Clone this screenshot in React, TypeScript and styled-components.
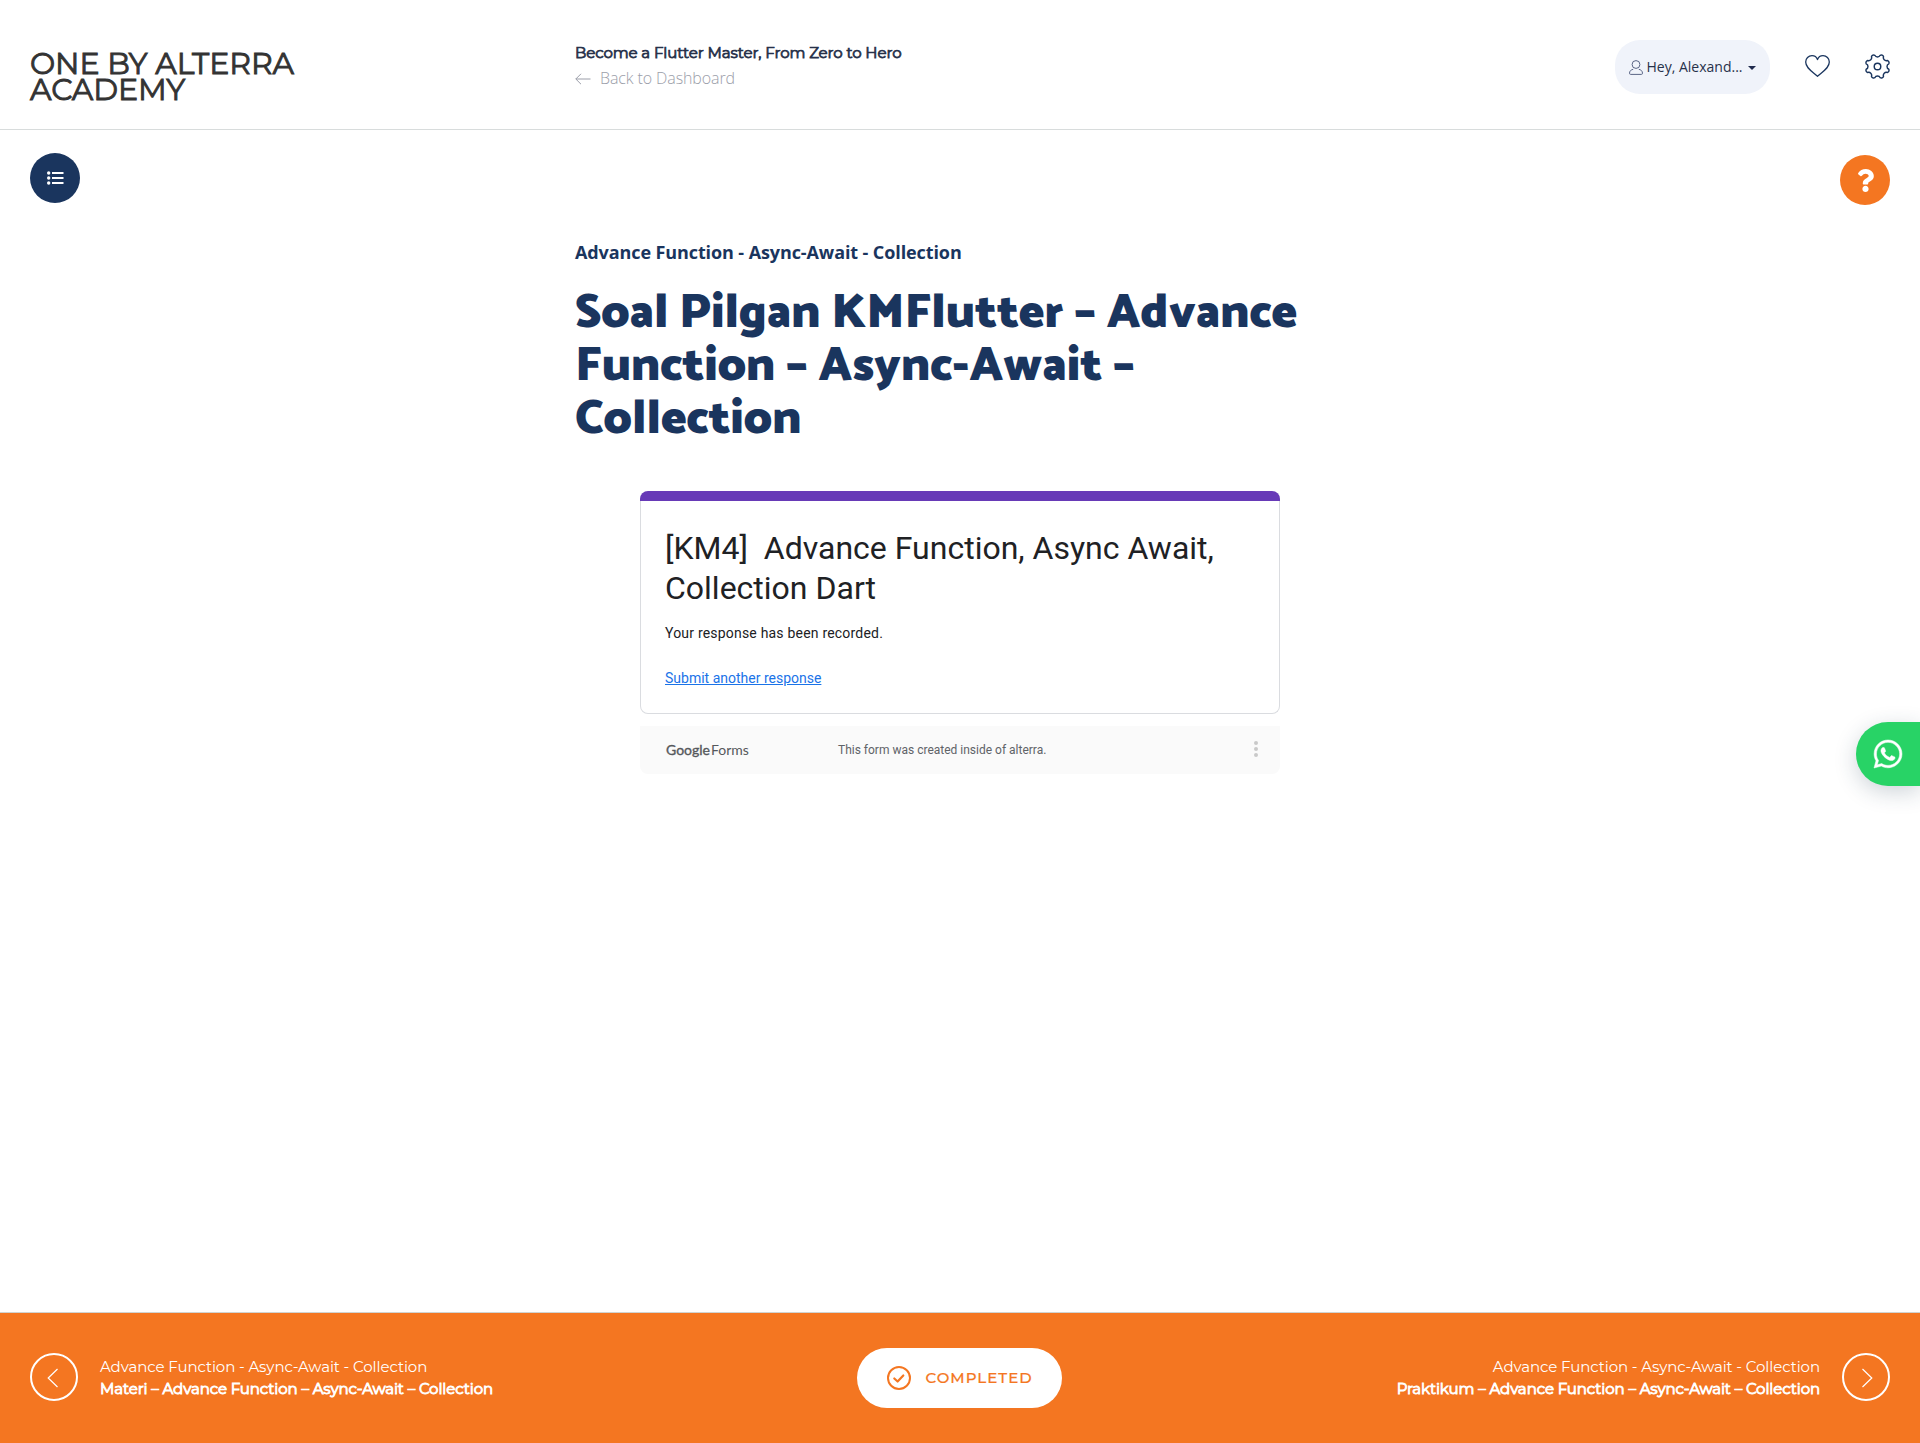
import React from "react";
import styled, { createGlobalStyle } from "styled-components";
import { FaQuestion, FaWhatsapp } from "react-icons/fa";

const navy = "#1a355e";
const orange = "#f47621";
const display = `Montserrat, Inter, "Liberation Sans", sans-serif`;
const body = `"Open Sans", "Noto Sans", sans-serif`;

const GlobalStyle = createGlobalStyle`
  * { box-sizing: border-box; }
  body { margin: 0; background: #fff; font-family: ${body}; color: ${navy}; }
  h1, h2, p { margin: 0; }
  svg { display: block; flex: none; }
`;

const Page = styled.div`
  display: flex;
  flex-direction: column;
  height: 1443px;
  overflow: hidden;
`;

const Header = styled.header`
  display: grid;
  grid-template-columns: 545px 1fr auto;
  height: 130px;
  padding: 0 30px;
  border-bottom: 1px solid #d8dcdc;
`;

const Brand = styled.div`
  width: 300px;
  padding-top: 51px;
  font: 400 30px/26px ${display};
  letter-spacing: -0.05px;
  -webkit-text-stroke: 0.9px currentColor;
  color: #333;
`;

const Course = styled.div`
  padding-top: 40px;
`;

const CourseName = styled.div`
  font: 400 15px/25px ${display};
  letter-spacing: -0.09px;
  -webkit-text-stroke: 0.75px currentColor;
  color: #27314a;
`;

const BackLink = styled.a`
  display: flex;
  align-items: center;
  gap: 9px;
  margin-top: 1px;
  font: 300 16px/25px ${body};
  letter-spacing: -0.1px;
  color: #9b9ea9;
`;

const Tools = styled.div`
  display: flex;
  align-items: flex-start;
  padding-top: 40px;
`;

const UserPill = styled.button`
  display: flex;
  align-items: center;
  width: 155px;
  height: 54px;
  padding: 0 14px;
  border: 0;
  border-radius: 25px;
  background: #f0f3fa;
  font: 400 14px/20px ${body};
  color: #27314a;
`;

const UserName = styled.span`
  margin: 0 5.5px 0 3.5px;
  white-space: nowrap;
`;

const Caret = styled.span`
  border-top: 4px solid #1f2a4d;
  border-left: 4px solid transparent;
  border-right: 4px solid transparent;
  margin-top: 2px;
`;

const ToolIcon = styled.span`
  display: flex;
  align-items: center;
  height: 52px;
  margin-left: 35px;
`;

const Main = styled.main`
  display: flex;
  justify-content: space-between;
  flex: 1;
  padding: 0 30px;
`;

const RoundButton = styled.button<{ $bg: string; $top: number }>`
  display: flex;
  align-items: center;
  justify-content: center;
  width: 50px;
  height: 50px;
  margin-top: ${(p) => p.$top}px;
  padding: 0;
  border: 0;
  border-radius: 50%;
  background: ${(p) => p.$bg};
  color: #fff;
`;

const Lesson = styled.article`
  width: 770px;
  padding-top: 109px;
`;

const Topic = styled.p`
  font: 700 18px/26px ${body};
  letter-spacing: -0.1px;
`;

const LessonTitle = styled.h1`
  margin: 23px 0 44.6px;
  font: 900 48px/52.8px Catamaran, "Noto Sans", sans-serif;
`;

const FormFrame = styled.section`
  width: 640px;
  margin: 0 auto;
  font-family: Roboto, sans-serif;
`;

const FormStripe = styled.div`
  height: 10px;
  border-radius: 8px 8px 0 0;
  background: #673ab7;
`;

const FormCard = styled.div`
  height: 213px;
  padding: 27px 20px 0 24px;
  border: 1px solid #dadce0;
  border-top: 0;
  border-radius: 0 0 8px 8px;
  background: #fff;
  color: #202124;
`;

const FormTitle = styled.h2`
  font-weight: 400;
  font-size: 32px;
  line-height: 40px;
`;

const FormText = styled.p`
  margin: 15px 0 25px;
  font-size: 14px;
  line-height: 20px;
  letter-spacing: 0.2px;
`;

const FormLink = styled.a`
  display: block;
  font-size: 14px;
  line-height: 20px;
  color: #1a73e8;
  text-decoration: underline;
`;

const FormFooter = styled.footer`
  display: flex;
  align-items: center;
  height: 48px;
  margin-top: 12px;
  padding: 0 22px 0 26px;
  border-radius: 0 0 8px 8px;
  background: #fafafa;
`;

const FormsLogo = styled.div`
  width: 172px;
  font: 400 14px/20px Lato, sans-serif;
  color: #55585c;
  b {
    font-weight: 400;
    margin-right: 1px;
    -webkit-text-stroke: 0.35px currentColor;
  }
`;

const FormNote = styled.div`
  flex: 1;
  font-size: 12px;
  line-height: 16px;
  color: #5f6368;
`;

const WhatsAppTab = styled.button`
  position: absolute;
  right: 0;
  top: 722px;
  display: flex;
  align-items: center;
  width: 64px;
  height: 64px;
  padding: 0 0 0 16px;
  border: 0;
  border-radius: 32px 0 0 32px;
  background: #28d366;
  color: #fff;
  box-shadow: 0 6px 22px rgba(30, 60, 80, 0.22);
  svg { stroke: #fff; stroke-width: 8; }
`;

const BottomBar = styled.nav`
  display: grid;
  grid-template-columns: 1fr auto 1fr;
  align-items: center;
  height: 131px;
  padding: 0 30px;
  border-top: 1px solid #d0d3d0;
  background: ${orange};
  background-clip: padding-box;
  color: #fff;
`;

const StepLink = styled.a<{ $end?: boolean }>`
  display: flex;
  flex-direction: ${(p) => (p.$end ? "row-reverse" : "row")};
  align-items: center;
  gap: 22px;
  text-align: ${(p) => (p.$end ? "right" : "left")};
`;

const StepCircle = styled.span<{ $end?: boolean }>`
  display: flex;
  align-items: center;
  justify-content: center;
  width: 48px;
  height: 48px;
  margin-bottom: 2px;
  padding: ${(p) => (p.$end ? "1px 0 0 1px" : "1px 2px 0 0")};
  border: 2px solid #fff;
  border-radius: 50%;
`;

const StepTopic = styled.div`
  font: 400 15px/22px ${display};
  letter-spacing: -0.09px;
`;

const StepName = styled.div`
  font: 400 15px/22px ${display};
  letter-spacing: -0.095px;
  -webkit-text-stroke: 0.85px currentColor;
`;

const Completed = styled.button`
  display: flex;
  align-items: center;
  gap: 15px;
  width: 205px;
  height: 60px;
  margin-right: 2px;
  padding: 0 0 0 30px;
  border: 0;
  border-radius: 30px;
  background: #fff;
  color: ${orange};
  font: 500 15px/20px ${display};
  letter-spacing: 1.02px;
  -webkit-text-stroke: 0.2px currentColor;
`;

const gearPath = (() => {
  const c = 13, R = 12;
  const at = (deg: number) => {
    const a = (deg * Math.PI) / 180;
    return `${(c + R * Math.cos(a)).toFixed(2)} ${(c + R * Math.sin(a)).toFixed(2)}`;
  };
  let d = "";
  for (let k = 0; k < 8; k++) {
    const a = 22.5 + 45 * k;
    d += `${k ? "" : `M${at(a - 9)}`} A2.4 2.4 0 0 1 ${at(a + 9)} A3.1 3.1 0 0 0 ${at(a + 36)}`;
  }
  return d + "Z";
})();

const ArrowLeft = () => (
  <svg width="16" height="12" viewBox="0 0 16 12" fill="none" stroke="currentColor" strokeWidth="1">
    <path d="M6 .8.8 6 6 11.2M.8 6H15.5" />
  </svg>
);

const UserIcon = () => (
  <svg width="14" height="15" viewBox="0 0 14 15" fill="none" stroke="#5a6585" strokeWidth="1">
    <circle cx="7" cy="4.5" r="3.9" />
    <path d="M4.2 9.3C2 9.8.6 10.9.5 13.2c0 .8.4 1.2 1.1 1.2h10.8c.7 0 1.1-.4 1.1-1.2-.1-2.3-1.5-3.4-3.7-3.9" />
  </svg>
);

const HeartIcon = () => (
  <svg width="25" height="22" viewBox="0 0 25 22" fill="none" stroke={navy} strokeWidth="1.3" strokeLinejoin="round">
    <path d="M12.5 4.6C11.6 2.1 9.5.7 7 .7 3.5.7.7 3.3.7 7c0 6 6.4 9.4 11.8 14.2C17.9 16.4 24.3 13 24.3 7c0-3.7-2.8-6.3-6.3-6.3-2.5 0-4.6 1.4-5.5 3.9Z" />
  </svg>
);

const GearIcon = () => (
  <svg width="25" height="25" viewBox="0 0 26 26" fill="none" stroke={navy} strokeWidth="1.5" strokeLinejoin="round">
    <path d={gearPath} />
    <circle cx="13" cy="13" r="3.4" />
  </svg>
);

const ListIcon = () => (
  <svg width="17" height="14" viewBox="0 0 17 14" fill="#fff">
    <circle cx="1.7" cy="2" r="1.7" />
    <circle cx="1.7" cy="7" r="1.7" />
    <circle cx="1.7" cy="12" r="1.7" />
    <path d="M5 1h11.5v2H5zM5 6h11.5v2H5zM5 11h11.5v2H5z" />
  </svg>
);

const Chevron = ({ right }: { right?: boolean }) => (
  <svg width="12" height="20" viewBox="0 0 12 20" fill="none" stroke="#fff" strokeWidth="1.2">
    <path d={right ? "M1.5 1 10.8 10 1.5 19" : "M10.5 1 1.2 10 10.5 19"} />
  </svg>
);

const CheckCircle = () => (
  <svg width="24" height="24" viewBox="0 0 24 24" fill="none" stroke={orange} strokeWidth="2" strokeLinecap="round" strokeLinejoin="round">
    <circle cx="12" cy="12" r="11" />
    <path d="m7.3 12.5 3.3 3 5.7-6" strokeWidth="2.2" />
  </svg>
);

const MoreIcon = () => (
  <svg width="4" height="18" viewBox="0 0 4 18" fill="#c9c9c9">
    <circle cx="2" cy="2" r="2" />
    <circle cx="2" cy="8" r="2" />
    <circle cx="2" cy="14" r="2" />
  </svg>
);

export default function App() {
  return (
    <Page>
      <GlobalStyle />
      <Header>
        <Brand>ONE BY ALTERRA ACADEMY</Brand>
        <Course>
          <CourseName>Become a Flutter Master, From Zero to Hero</CourseName>
          <BackLink>
            <ArrowLeft />
            Back to Dashboard
          </BackLink>
        </Course>
        <Tools>
          <UserPill>
            <UserIcon />
            <UserName>Hey, Alexand...</UserName>
            <Caret />
          </UserPill>
          <ToolIcon><HeartIcon /></ToolIcon>
          <ToolIcon><GearIcon /></ToolIcon>
        </Tools>
      </Header>

      <Main>
        <RoundButton $bg={navy} $top={23}><ListIcon /></RoundButton>
        <Lesson>
          <Topic>Advance Function - Async-Await - Collection</Topic>
          <LessonTitle>Soal Pilgan KMFlutter – Advance Function – Async-Await – Collection</LessonTitle>
          <FormFrame>
            <FormStripe />
            <FormCard>
              <FormTitle>[KM4]&nbsp; Advance Function, Async Await, Collection Dart</FormTitle>
              <FormText>Your response has been recorded.</FormText>
              <FormLink>Submit another response</FormLink>
            </FormCard>
            <FormFooter>
              <FormsLogo><b>Google</b>Forms</FormsLogo>
              <FormNote>This form was created inside of alterra.</FormNote>
              <MoreIcon />
            </FormFooter>
          </FormFrame>
        </Lesson>
        <RoundButton $bg={orange} $top={25}><FaQuestion size={23} /></RoundButton>
      </Main>

      <WhatsAppTab><FaWhatsapp size={32} /></WhatsAppTab>

      <BottomBar>
        <StepLink>
          <StepCircle><Chevron /></StepCircle>
          <div>
            <StepTopic>Advance Function - Async-Await - Collection</StepTopic>
            <StepName>Materi – Advance Function – Async-Await – Collection</StepName>
          </div>
        </StepLink>
        <Completed><CheckCircle />COMPLETED</Completed>
        <StepLink $end>
          <StepCircle $end><Chevron right /></StepCircle>
          <div>
            <StepTopic>Advance Function - Async-Await - Collection</StepTopic>
            <StepName>Praktikum – Advance Function – Async-Await – Collection</StepName>
          </div>
        </StepLink>
      </BottomBar>
    </Page>
  );
}
